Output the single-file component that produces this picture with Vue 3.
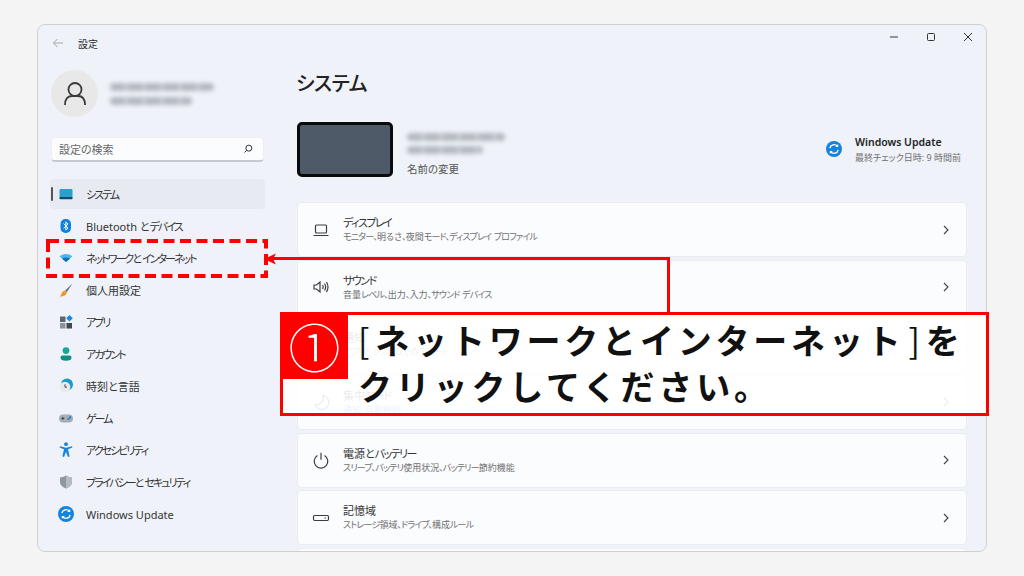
<script setup>
const line = 'fill="none" stroke="#3c3c3c" stroke-width="1.2"'
const syncIcon = '<circle cx="9" cy="9" r="8" fill="#1484dc"/><path d="M4.8 8.2A4.3 4.3 0 0 1 12.4 6.3M13.2 9.8A4.3 4.3 0 0 1 5.6 11.7" fill="none" stroke="#fff" stroke-width="1.3"/><path d="M13.2 4v3h-3zM4.8 14v-3h3z" fill="#fff"/>'
const runs = (text) =>
  text.match(/[\u30A0-\u30FF、]+|[^\u30A0-\u30FF、]+/g).map((t) => ({ t, k: /[\u30A0-\u30FF、]/.test(t[0]) }))
const nav = [
  { label: 'システム', active: true, icon: '<rect x="2.5" y="4" width="13" height="10" rx="1" fill="#2aa0cf"/><rect x="2.5" y="12" width="13" height="2.200" rx="1" fill="#104a6d"/>' },
  { label: 'Bluetooth とデバイス', icon: '<rect x="3.5" y="2" width="10.500" height="14" rx="5" fill="#0f7fe0"/><path d="M6.700 6.500 11 11 8.900 13.200V4.800L11 7 6.700 11.500" fill="none" stroke="#fff" stroke-width="1"/>' },
  { label: 'ネットワークとインターネット', icon: '<path d="M2.500 7.200Q9 3 15.500 7.200L9 13z" fill="#4db5ee"/><path d="M5 9.800Q9 7.400 13 9.800L9 13z" fill="#0f6cc0"/>' },
  { label: '個人用設定', icon: '<path d="M15.500 2.500 8 9.500 9.800 11.200z" fill="#6d7680"/><path d="M8 9.500Q5 10 4.500 12.500 4 14.500 2.500 15.500 7 16 9 13.500 10 12.300 9.800 11.200z" fill="#f0962e"/>' },
  { label: 'アプリ', icon: '<rect x="3" y="3.500" width="5.500" height="5.500" fill="#5d6670"/><rect x="3" y="10" width="5.500" height="5.500" fill="#8b939b"/><rect x="9.500" y="10" width="5.500" height="5.500" fill="#3f474f"/><path d="M12.500 2 15.800 5.300 12.500 8.600 9.200 5.300z" fill="#1a86dc"/>' },
  { label: 'アカウント', icon: '<circle cx="9" cy="5.600" r="3.400" fill="#14a89a"/><path d="M3.500 12.600Q3.500 10.600 5.500 10.600H12.500Q14.500 10.600 14.500 12.600 14.500 15.800 9 15.800 3.500 15.800 3.500 12.600z" fill="#0f8f86"/>' },
  { label: '時刻と言語', icon: '<circle cx="10" cy="7.500" r="6" fill="#1a9bc9"/><circle cx="8" cy="10" r="5.300" fill="#e8eaec"/><path d="M8 7.300v2.900h2" fill="none" stroke="#444" stroke-width="1"/>' },
  { label: 'ゲーム', icon: '<rect x="2" y="5.500" width="14" height="8" rx="4" fill="#a7adb4"/><path d="M4.300 9.400h3M5.800 7.900v3" stroke="#3e4650" stroke-width="1"/><circle cx="11.500" cy="10" r="1.100" fill="#1a76c8"/><circle cx="13.200" cy="8.300" r="1.100" fill="#1a76c8"/>' },
  { label: 'アクセシビリティ', icon: '<circle cx="9" cy="3.200" r="1.900" fill="#1585dd"/><path d="M3 5.200 9 6.800 15 5.200 15.400 6.600 11 8.300 12.600 15.600 11 16 9 11 7 16 5.400 15.600 7 8.300 2.600 6.600z" fill="#1585dd"/>' },
  { label: 'プライバシーとセキュリティ', icon: '<path d="M9 2.500Q12 4.400 15 4.400V9Q15 13.300 9 15.500 3 13.300 3 9V4.400Q6 4.400 9 2.500z" fill="#8f979f"/><path d="M9 2.500Q12 4.400 15 4.400V9Q15 13.300 9 15.500z" fill="#b5bbc1"/>' },
  { label: 'Windows Update', icon: syncIcon },
]
const cards = [
  { title: 'ディスプレイ', sub: 'モニター、明るさ、夜間モード、ディスプレイ プロファイル', icon: `<rect x="3.500" y="4" width="11" height="8" rx="1" ${line}/><path d="M1.500 14.500h15" ${line}/>` },
  { title: 'サウンド', sub: '音量レベル、出力、入力、サウンド デバイス', icon: `<path d="M2 7h2.500L8 4v10l-3.500-3H2z" ${line}/><path d="M10.500 7Q11.800 9 10.500 11M12.500 5.500Q14.800 9 12.500 12.500M14.500 4Q17.500 9 14.500 14" ${line}/>` },
  { title: '通知', sub: 'アプリとシステムでのアラート', icon: `<path d="M5 12V8a4 4 0 0 1 8 0v4l1.500 1.500h-11z" ${line}/>` },
  { title: '集中モード', sub: '通知、自動規則', icon: `<path d="M11 2.500A7 7 0 1 1 3 11.500 7 7 0 0 0 11 2.500z" ${line}/>` },
  { title: '電源とバッテリー', sub: 'スリープ、バッテリ使用状況、バッテリー節約機能', icon: `<path d="M5.500 4.500a6.800 6.800 0 1 0 7 0M9 1.800v7" ${line}/>` },
  { title: '記憶域', sub: 'ストレージ領域、ドライブ、構成ルール', icon: `<rect x="1.500" y="6.500" width="15" height="5" rx="1.200" ${line}/><path d="M12.500 9h1.500" ${line}/>` },
]
</script>

<template>
  <div class="page">
    <div class="window">
      <aside class="side">
        <div class="bar">
          <svg width="12" height="12" viewBox="0 0 12 12"><path d="M11 6H1.500M5.500 2 1.500 6l4 4" fill="none" stroke="#a4a8ad" stroke-width="1"/></svg>
          <span>設定</span>
        </div>
        <div class="user">
          <div class="avatar">
            <svg width="24" height="26" viewBox="0 0 24 26"><circle cx="12" cy="8.500" r="6.500" fill="none" stroke="#3a3a3a" stroke-width="1.800"/><path d="M2 24Q2 15 9 15H15Q22 15 22 24" fill="none" stroke="#3a3a3a" stroke-width="1.800"/></svg>
          </div>
          <div class="blur-block">
            <div class="smear w1"></div>
            <div class="smear w2"></div>
          </div>
        </div>
        <div class="search">
          <span>設定の検索</span>
          <svg width="10" height="10" viewBox="0 0 12 12"><circle cx="7" cy="5" r="3.600" fill="none" stroke="#333" stroke-width="1.200"/><path d="M4.600 7.400 1.800 10.200" stroke="#333" stroke-width="1.200"/></svg>
        </div>
        <nav class="nav">
          <div v-for="n in nav" :key="n.label" class="item" :class="{ active: n.active }">
            <i v-if="n.active" class="pip"></i>
            <svg width="18" height="18" viewBox="0 0 18 18" v-html="n.icon"></svg>
            <span><span v-for="(r, i) in runs(n.label)" :key="i" :class="{ k: r.k }">{{ r.t }}</span></span>
          </div>
        </nav>
      </aside>
      <main class="main">
        <div class="controls">
          <svg width="10" height="10" viewBox="0 0 10 10"><path d="M1 5h8" stroke="#333" stroke-width="1"/></svg>
          <svg width="10" height="10" viewBox="0 0 10 10"><rect x="1.500" y="1.500" width="7" height="7" rx="1" fill="none" stroke="#333" stroke-width="1"/></svg>
          <svg width="10" height="10" viewBox="0 0 10 10"><path d="M1 1l8 8M9 1l-8 8" stroke="#333" stroke-width="1"/></svg>
        </div>
        <h1>システム</h1>
        <section class="device">
          <div class="monitor"></div>
          <div class="dev-text">
            <div class="smear w3"></div>
            <div class="smear w4"></div>
            <span class="rename">名前の変更</span>
          </div>
          <div class="update">
            <svg width="18" height="18" viewBox="0 0 18 18" v-html="syncIcon"></svg>
            <div>
              <b>Windows Update</b>
              <small>最終チェック日時: 9 時間前</small>
            </div>
          </div>
        </section>
        <section class="cards">
          <div v-for="c in cards" :key="c.title" class="card">
            <svg width="18" height="18" viewBox="0 0 18 18" v-html="c.icon"></svg>
            <div class="card-text">
              <span class="t"><span v-for="(r, i) in runs(c.title)" :key="i" :class="{ k: r.k }">{{ r.t }}</span></span>
              <span class="s"><span v-for="(r, i) in runs(c.sub)" :key="i" :class="{ k: r.k }">{{ r.t }}</span></span>
            </div>
            <svg class="chev" width="10" height="10" viewBox="0 0 10 10"><path d="M3 1l4 4-4 4" fill="none" stroke="#444" stroke-width="1.100"/></svg>
          </div>
          <div class="card"></div>
        </section>
      </main>
    </div>

    <svg class="dash" width="222" height="39" viewBox="0 0 222 39"><rect x="2" y="2" width="218" height="35" fill="none" stroke="#f00" stroke-width="4" stroke-dasharray="11 5.500"/></svg>
    <div class="connector">
      <svg class="head" width="12" height="12" viewBox="0 0 12 12"><path d="M0 6 12 0.500 9 6 12 11.500z" fill="#f00"/></svg>
    </div>
    <div class="callout">
      <div class="num">①</div>
      <p><span class="lb">[</span>ネットワークとインターネット<span class="rb">]</span>を<br>クリックしてください。</p>
    </div>
  </div>
</template>

<style>
html, body { margin: 0; background: #f4f4f4; }
</style>

<style scoped>
* { box-sizing: border-box; }
.page {
  position: relative;
  width: 1024px;
  height: 576px;
  padding: 24px 37px;
  overflow: hidden;
  background: #f4f4f4;
  font-family: "Noto Sans", "Noto Sans CJK JP", sans-serif;
  font-feature-settings: "palt";
  color: #2b2b2b;
}
.window {
  display: flex;
  height: 528px;
  border: 1px solid #cfcfcf;
  border-radius: 8px;
  background: #eff3f9;
  overflow: hidden;
}
.side { width: 242px; flex: none; padding-left: 12px; }
.bar { display: flex; align-items: center; gap: 14px; height: 36px; padding-left: 2px; font-size: 10px; }
.user { display: flex; align-items: center; gap: 12px; margin-top: 9px; margin-left: 1px; }
.avatar {
  width: 47px; height: 47px; border-radius: 50%;
  background: #e8e8e8;
  display: flex; align-items: center; justify-content: center;
}
.blur-block { display: flex; flex-direction: column; gap: 6px; }
.smear {
  height: 8px;
  border-radius: 4px;
  background: repeating-linear-gradient(90deg, #b4b8bf 0 14px, #c6cad0 14px 18px);
  filter: blur(2.200px);
}
.w1 { width: 104px; }
.w2 { width: 82px; }
.w3 { width: 98px; }
.w4 { width: 76px; }
.search {
  display: flex; align-items: center; justify-content: space-between;
  width: 213px; height: 25px; margin: 20px 0 0 1px;
  padding: 0 10px 0 7px;
  background: #fbfcfe;
  border: 1px solid #eceef2;
  border-bottom: 2px solid #c6c9cf;
  border-radius: 4px;
  font-size: 11px;
  color: #666;
}
.nav { display: flex; flex-direction: column; gap: 2px; margin-top: 17px; }
.item {
  position: relative;
  display: flex; align-items: center; gap: 11px;
  width: 215px; height: 30px; padding-left: 7px;
  border-radius: 4px;
  font-size: 11px;
  color: #333;
}
.item.active { background: #e7ebf1; }
.pip { position: absolute; left: 1px; top: 8px; width: 2px; height: 14px; background: #555; border-radius: 1px; }
.k { letter-spacing: -0.14em; }
.item .k { letter-spacing: -0.18em; }
.main { flex: 1; min-width: 0; padding: 0 19px 0 17px; overflow: hidden; }
.controls { display: flex; justify-content: flex-end; gap: 27px; height: 24px; align-items: center; margin-right: -6px; }
h1 { margin: 23px 0 0 -1px; height: 24px; font-size: 20px; line-height: 24px; font-weight: 500; color: #222; letter-spacing: -0.5px; }
.device { display: flex; align-items: center; margin-top: 26px; height: 55px; }
.monitor {
  width: 96px; height: 55px;
  background: #4f5a68;
  border: 3px solid #0a0a0a;
  border-radius: 5px;
}
.dev-text { margin-left: 14px; display: flex; flex-direction: column; gap: 5px; padding-top: 9px; }
.rename { font-size: 10.500px; line-height: 14px; color: #555; margin-top: 3px; }
.update { margin-left: auto; display: flex; align-items: center; gap: 12px; margin-right: 6px; }
.update svg { margin: -2px 0 0 -1px; }
.update div { display: flex; flex-direction: column; }
.update b { font-size: 10.500px; line-height: 15px; font-weight: 600; color: #222; }
.update small { font-size: 9px; line-height: 15px; color: #707070; }
.cards { display: flex; flex-direction: column; gap: 2.670px; margin-top: 25px; }
.card {
  flex: none;
  display: flex; align-items: center;
  height: 55px; padding-left: 14px; padding-right: 15px;
  background: #fbfcfe;
  border: 1px solid #e9ecf1;
  border-radius: 4px;
}
.card-text { display: flex; flex-direction: column; margin-left: 13px; }
.t { font-size: 11px; line-height: 15px; color: #333; }
.s { font-size: 9px; line-height: 14px; color: #707070; }
.s .k { letter-spacing: -0.09em; }
.chev { margin-left: auto; }

.dash { position: absolute; left: 46px; top: 239px; }
.connector {
  position: absolute; left: 266px; top: 257px; width: 404px; height: 56px;
  border-top: 3px solid #f00;
  border-right: 3px solid #f00;
}
.head { position: absolute; left: -2px; top: -7.500px; }
.callout {
  position: absolute; left: 280px; top: 312px; width: 709px; height: 104px;
  border: 3px solid #f00;
  background: rgba(255, 255, 255, 0.9);
}
.num {
  position: absolute; left: -2px; top: -3px;
  width: 67px; height: 67px;
  background: #f00; color: #fff;
  display: flex; align-items: center; justify-content: center;
  font-size: 52px; line-height: 1;
  font-weight: 300;
  font-family: "Noto Sans CJK JP", sans-serif;
  font-feature-settings: normal;
}
p {
  margin: 0;
  padding: 2px 0 0 75px;
  font-family: "Noto Sans CJK JP", sans-serif;
  font-feature-settings: normal;
  font-size: 34px;
  line-height: 46px;
  font-weight: 700;
  letter-spacing: 3.800px;
  color: #111;
}
.lb { font-weight: 400; margin-right: 2px; }
.rb { font-weight: 400; margin-left: 4px; margin-right: 2px; }
</style>
